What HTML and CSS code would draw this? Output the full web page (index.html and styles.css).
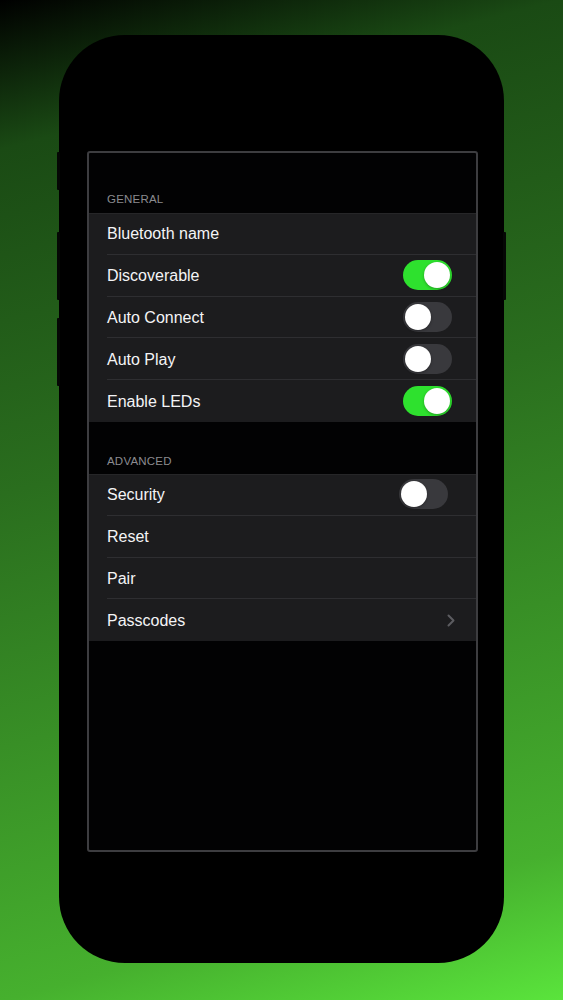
FILE: index.html
```html
<!DOCTYPE html>
<html lang="en">
<head>
<meta charset="utf-8">
<title>Settings</title>
<link rel="stylesheet" href="styles.css">
</head>
<body>
<div class="phone">
  <span class="btn btn-mute"></span>
  <span class="btn btn-vol-up"></span>
  <span class="btn btn-vol-down"></span>
  <span class="btn btn-power"></span>
  <div class="screen">
    <div class="section-header first">GENERAL</div>
    <div class="group">
      <div class="row"><span class="label">Bluetooth name</span></div>
      <div class="row"><span class="label">Discoverable</span><span class="switch on"><span class="knob"></span></span></div>
      <div class="row"><span class="label">Auto Connect</span><span class="switch"><span class="knob"></span></span></div>
      <div class="row"><span class="label">Auto Play</span><span class="switch"><span class="knob"></span></span></div>
      <div class="row"><span class="label">Enable LEDs</span><span class="switch on"><span class="knob"></span></span></div>
    </div>
    <div class="section-header">ADVANCED</div>
    <div class="group">
      <div class="row"><span class="label">Security</span><span class="switch shifted"><span class="knob"></span></span></div>
      <div class="row"><span class="label">Reset</span></div>
      <div class="row"><span class="label">Pair</span></div>
      <div class="row"><span class="label">Passcodes</span>
        <svg class="chevron" width="8" height="13" viewBox="0 0 8 13"><path d="M1.5 1.5 L6.5 6.5 L1.5 11.5" fill="none" stroke="#5c5c60" stroke-width="2" stroke-linecap="round" stroke-linejoin="round"/></svg>
      </div>
    </div>
  </div>
</div>
</body>
</html>
```
FILE: styles.css
```css
* { box-sizing: border-box; }
html, body { margin: 0; padding: 0; }
body {
  width: 563px;
  height: 1000px;
  overflow: hidden;
  padding: 35px 0 0 59px;
  background: linear-gradient(165deg, #000 0%, #1a4a14 13%, #2a6e1e 43%, #46b02e 87%, #5ae43c 100%);
  font-family: "Liberation Sans", Arial, sans-serif;
}
.phone {
  position: relative;
  width: 445px;
  height: 928px;
  background: #000;
  border-radius: 66px;
  padding: 116px 26px 0 28px;
}
.btn {
  position: absolute;
  width: 3px;
  background: #050705;
  border-radius: 1px;
}
.btn-mute { left: -2px; top: 117px; height: 38px; }
.btn-vol-up { left: -2px; top: 197px; height: 68px; }
.btn-vol-down { left: -2px; top: 283px; height: 68px; }
.btn-power { right: -2px; top: 197px; height: 68px; }
.screen {
  width: 391px;
  height: 701px;
  border: 2px solid #3d3d40;
  border-radius: 3px;
  background: #020203;
}
.section-header {
  padding: 32px 18px 0;
  height: 52px;
  font-size: 11.5px;
  line-height: 14px;
  letter-spacing: 0.2px;
  color: #8b8b90;
}
.section-header.first {
  padding-top: 39px;
  height: 60px;
}
.group {
  background: #1c1c1e;
  box-shadow: inset 0 1px 0 #262628;
}
.row {
  display: flex;
  align-items: center;
  justify-content: space-between;
  height: 41.8px;
  margin-left: 18px;
  padding-right: 24px;
  border-bottom: 1px solid #2e2e31;
}
.row:last-child { border-bottom: none; }
.label {
  padding-top: 2px;
  font-size: 16px;
  color: #f4f4f6;
}
.switch {
  position: relative;
  width: 49px;
  height: 30px;
  border-radius: 15px;
  background: #39393d;
  display: flex;
  align-items: center;
  padding: 0 2px;
}
.switch.on {
  background: #2ee12e;
  justify-content: flex-end;
}
.switch.shifted { margin-right: 4px; }
.knob {
  width: 26px;
  height: 26px;
  border-radius: 50%;
  background: #fff;
  box-shadow: 0 1px 3px rgba(0,0,0,0.3);
}
.chevron { margin-right: -3px; }
```
